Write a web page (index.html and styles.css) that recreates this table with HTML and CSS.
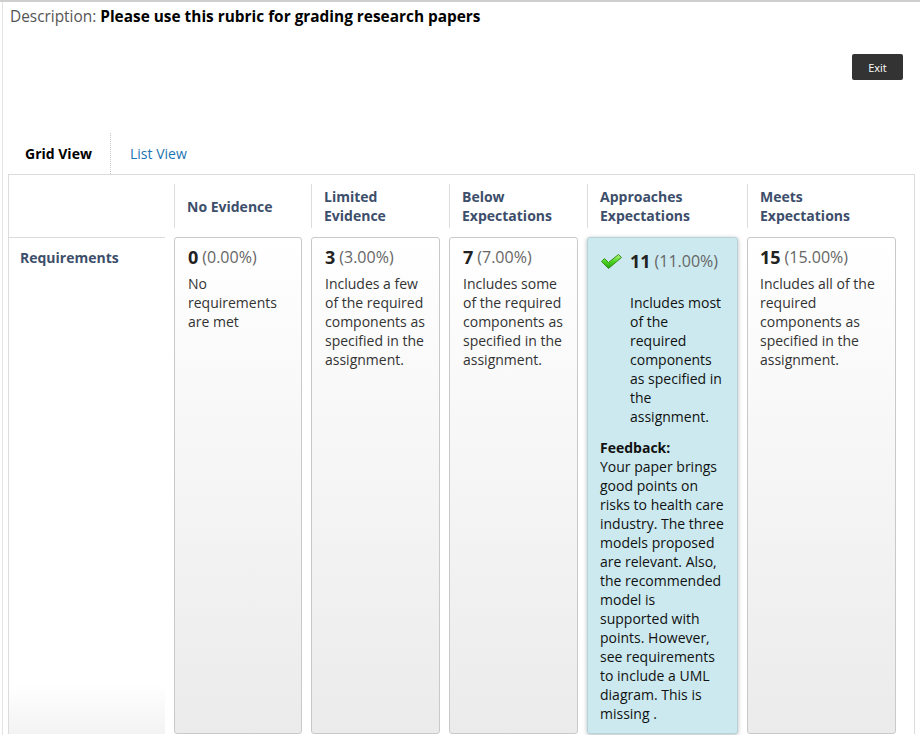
FILE: index.html
```html
<!DOCTYPE html>
<html lang="en">
<head>
<meta charset="utf-8">
<title>Rubric</title>
<link rel="stylesheet" href="styles.css">
</head>
<body>
<div class="page">
  <div class="desc"><span class="desc-label">Description:</span> <b>Please use this rubric for grading research papers</b></div>
  <div class="actions"><button class="exit" type="button">Exit</button></div>
  <div class="tabs">
    <div class="tab tab-active">Grid View</div>
    <div class="tab tab-link">List View</div>
  </div>
  <div class="rubric">
    <div class="grid">
      <div class="corner"></div>
      <div class="colhead">No Evidence</div>
      <div class="colhead">Limited<br>Evidence</div>
      <div class="colhead">Below<br>Expectations</div>
      <div class="colhead">Approaches<br>Expectations</div>
      <div class="colhead">Meets<br>Expectations</div>

      <div class="rowhead">Requirements</div>
      <div class="cell">
        <div class="score"><b>0</b> <span class="pct">(0.00%)</span></div>
        <div class="text">No requirements are met</div>
      </div>
      <div class="cell">
        <div class="score"><b>3</b> <span class="pct">(3.00%)</span></div>
        <div class="text">Includes a few of the required components as specified in the assignment.</div>
      </div>
      <div class="cell">
        <div class="score"><b>7</b> <span class="pct">(7.00%)</span></div>
        <div class="text">Includes some of the required components as specified in the assignment.</div>
      </div>
      <div class="cell cell-selected">
        <div class="score">
          <svg class="check" width="23" height="17" viewBox="0 0 23 17" aria-hidden="true">
            <defs>
              <linearGradient id="g" x1="0" y1="0" x2="0" y2="1">
                <stop offset="0" stop-color="#b4f77c"/>
                <stop offset="0.5" stop-color="#4fd623"/>
                <stop offset="1" stop-color="#22a00b"/>
              </linearGradient>
            </defs>
            <path d="M1.5 8.5 L4.5 5.5 L8.5 9.5 L18.5 1.5 L21.5 4.5 L8.5 15.5 Z" fill="url(#g)" stroke="#3b8c1d" stroke-width="1" stroke-linejoin="round"/>
          </svg>
          <b>11</b> <span class="pct">(11.00%)</span>
        </div>
        <div class="text sel-text">Includes most of the required components as specified in the assignment.</div>
        <div class="feedback">
          <b>Feedback:</b><br>
          Your paper brings good points on risks to health care industry. The three models proposed are relevant. Also, the recommended model is supported with points. However, see requirements to include a UML diagram. This is missing .
        </div>
      </div>
      <div class="cell cell-last">
        <div class="score"><b>15</b> <span class="pct">(15.00%)</span></div>
        <div class="text">Includes all of the required components as specified in the assignment.</div>
      </div>
    </div>
  </div>
</div>
</body>
</html>
```

FILE: styles.css
```css
html, body {
  margin: 0;
  padding: 0;
  background: #fff;
}

body {
  font-family: "Open Sans", "DejaVu Sans", sans-serif;
  color: #222;
  border-top: 2px solid #cfcfcf;
}

.page {
  margin-left: 2px;
  border-left: 1px solid #e4e4e4;
  min-height: 733px;
}

.desc {
  font-size: 15.4px;
  line-height: 20px;
  padding: 5px 0 0 7px;
  color: #000;
}

.desc-label {
  color: #555;
}

.actions {
  display: flex;
  justify-content: flex-end;
  margin-top: 27px;
  padding-right: 17px;
}

.exit {
  width: 51px;
  height: 26px;
  background: #333;
  color: #fff;
  border: none;
  border-radius: 2px;
  font-family: "Open Sans", sans-serif;
  font-size: 11px;
  padding: 0;
}

.tabs {
  display: flex;
  margin: 53px 0 0 5px;
  height: 41px;
}

.tab {
  font-size: 14px;
  line-height: 41px;
}

.tab-active {
  font-weight: bold;
  color: #000;
  padding: 0 18px 0 17px;
  width: 67px;
  border-right: 1px dotted #c9c9c9;
}

.tab-link {
  color: #1c74b3;
  padding-left: 19px;
}

.rubric {
  margin-left: 5px;
  width: 907px;
  box-sizing: border-box;
  border: 1px solid #dcdcdc;
  border-bottom: none;
  padding-top: 9px;
}

.grid {
  display: grid;
  grid-template-columns: 156px 128px 129px 129px 151px 149px;
  column-gap: 9px;
  row-gap: 9px;
}

.colhead {
  height: 44px;
  display: flex;
  align-items: center;
  border-left: 1px solid #dcdcdc;
  padding-left: 12px;
  font-size: 14px;
  line-height: 19px;
  font-weight: bold;
  color: #3d4e6b;
}

.rowhead {
  border-top: 1px solid #dcdcdc;
  padding: 10px 0 0 11px;
  font-size: 14px;
  line-height: 19px;
  font-weight: bold;
  color: #3d4e6b;
  background: linear-gradient(to bottom, #fff 0%, #fff 90%, #f3f3f3 100%);
}

.cell {
  border: 1px solid #c9c9c9;
  border-radius: 3px;
  background: linear-gradient(to bottom, #ffffff 0%, #ebebeb 100%);
  padding: 8px 13px 10px 13px;
  color: #333;
}

.cell-last {
  padding-left: 12px;
}

.score {
  font-size: 16px;
  line-height: 22px;
  color: #333;
  display: flex;
  align-items: center;
}

.score b {
  font-size: 18px;
  color: #222;
  margin-right: 4px;
}

.pct {
  color: #666;
}

.text {
  margin-top: 6px;
  font-size: 14px;
  line-height: 19px;
}

.cell-selected {
  background: #cbe9ef;
  border-color: #b7d3da;
  box-shadow: 0 1px 4px rgba(0, 0, 0, 0.28);
  padding: 12px 12px 10px 12px;
  color: #111;
}

.check {
  margin-right: 7px;
}

.sel-text {
  margin: 21px 2px 0 30px;
}

.feedback {
  margin-top: 12px;
  font-size: 14px;
  line-height: 19px;
  color: #111;
}
```
